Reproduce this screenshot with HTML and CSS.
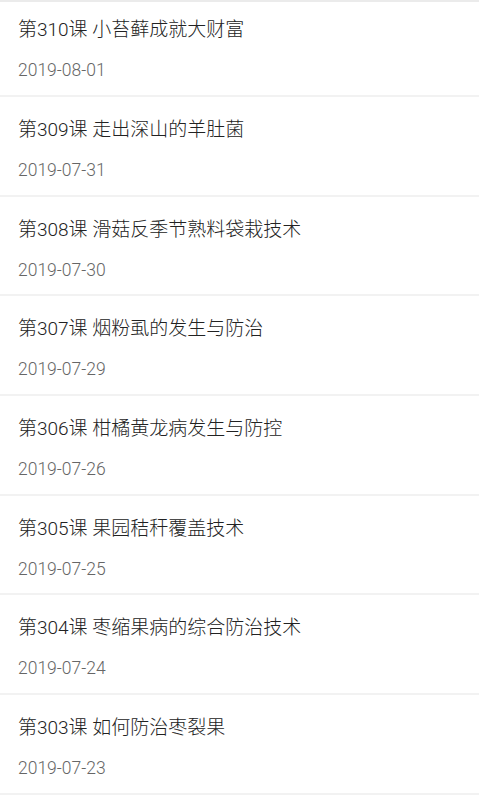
FILE: index.html
```html
<!DOCTYPE html>
<html lang="zh-CN">
<head>
  <meta charset="UTF-8" />
  <title>课程列表</title>
  <meta name="viewport" content="width=device-width, initial-scale=1.0" />
  <link rel="stylesheet" href="styles.css">
</head>
<body>

  <!-- Header edge -->
  <div class="topbar"></div>

  <!-- Lesson list -->
  <div class="list">
    <div class="item">
      <div class="item-title">第310课 小苔藓成就大财富</div>
      <div class="item-date">2019-08-01</div>
    </div>
    <div class="item">
      <div class="item-title">第309课 走出深山的羊肚菌</div>
      <div class="item-date">2019-07-31</div>
    </div>
    <div class="item">
      <div class="item-title">第308课 滑菇反季节熟料袋栽技术</div>
      <div class="item-date">2019-07-30</div>
    </div>
    <div class="item">
      <div class="item-title">第307课 烟粉虱的发生与防治</div>
      <div class="item-date">2019-07-29</div>
    </div>
    <div class="item">
      <div class="item-title">第306课 柑橘黄龙病发生与防控</div>
      <div class="item-date">2019-07-26</div>
    </div>
    <div class="item">
      <div class="item-title">第305课 果园秸秆覆盖技术</div>
      <div class="item-date">2019-07-25</div>
    </div>
    <div class="item">
      <div class="item-title">第304课 枣缩果病的综合防治技术</div>
      <div class="item-date">2019-07-24</div>
    </div>
    <div class="item">
      <div class="item-title">第303课 如何防治枣裂果</div>
      <div class="item-date">2019-07-23</div>
    </div>
  </div>

</body>
</html>
```

FILE: styles.css
```css
body {
  font-family: Roboto, "Noto Sans CJK SC", sans-serif;
  font-weight: 300;
  background: #fff;
  margin: 0;
  padding: 0;
  overflow: hidden;
}
.topbar {
  height: 2px;
  background: #ebebeb;
}
.list {
  margin-top: -4.7px;
}
.item {
  height: 97.7px;
  padding: 0 18px;
  border-bottom: 2px solid #f2f2f2;
}
.item-title {
  padding-top: 20px;
  font-size: 19px;
  line-height: 26px;
  color: #222;
}
.item-date {
  margin-top: 14px;
  font-size: 17.5px;
  line-height: 26px;
  color: #666;
}
```
